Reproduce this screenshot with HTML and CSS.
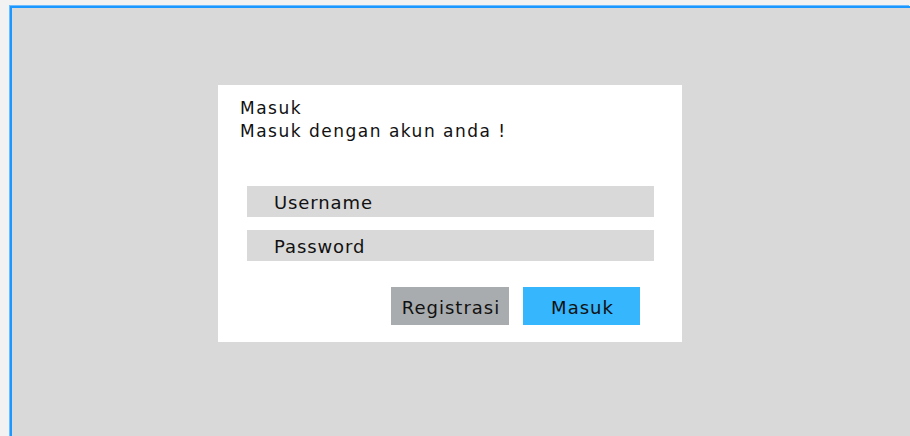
FILE: index.html
```html
<!DOCTYPE html>
<html lang="id">
<head>
<meta charset="utf-8">
<title>Masuk</title>
<link rel="stylesheet" href="styles.css">
</head>
<body>
<div class="frame">
  <form class="card">
    <div class="heading">
      <div>Masuk</div>
      <div>Masuk dengan akun anda !</div>
    </div>
    <div class="fields">
      <div class="field">Username</div>
      <div class="field">Password</div>
    </div>
    <div class="actions">
      <button type="button" class="btn btn-secondary">Registrasi</button>
      <button type="button" class="btn btn-primary">Masuk</button>
    </div>
  </form>
</div>
</body>
</html>
```

FILE: styles.css
```css
html, body {
  margin: 0;
  padding: 0;
  background: #f2f2f2;
  overflow: hidden;
}

body {
  font-family: "DejaVu Sans", "Open Sans", sans-serif;
  color: #111;
}

.frame {
  margin: 6px 0 0 10px;
  height: 440px;
  background: #d9d9d9;
  border-top: 2px solid #1a98ff;
  border-left: 2px solid #1a98ff;
  box-shadow: -1px -1px 0 #6cbcff;
  padding: 77px 0 0 206px;
  box-sizing: border-box;
}

.card {
  width: 464px;
  height: 257px;
  box-sizing: border-box;
  background: #fff;
  padding: 12px 28px 0 22px;
}

.heading {
  font-size: 17px;
  line-height: 23px;
  letter-spacing: 1.5px;
}

.fields {
  margin: 43px 0 0 7px;
  display: flex;
  flex-direction: column;
  gap: 13px;
}

.field {
  height: 31px;
  box-sizing: border-box;
  background: #d9d9d9;
  padding: 2px 0 0 27px;
  font-size: 18px;
  line-height: 29px;
  letter-spacing: 0.9px;
}

.actions {
  margin: 26px 14px 0 0;
  display: flex;
  justify-content: flex-end;
  gap: 14px;
}

.btn {
  height: 38px;
  border: none;
  font-family: inherit;
  font-size: 18px;
  letter-spacing: 1px;
  color: #111;
  padding: 2px 0 0 2px;
}

.btn-secondary {
  width: 118px;
  background: #a9acae;
}

.btn-primary {
  width: 117px;
  background: #36b6fd;
}
```
